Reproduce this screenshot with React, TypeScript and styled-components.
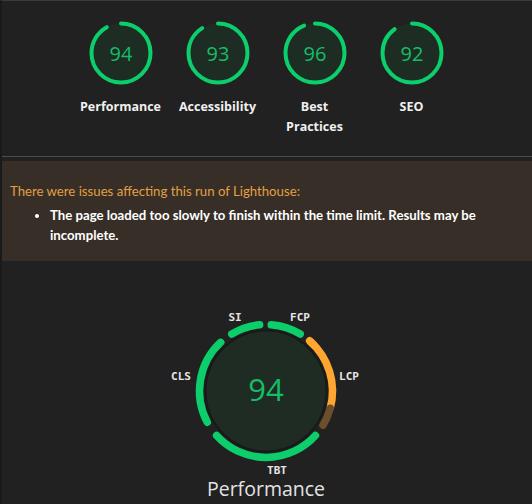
import React from "react";
import styled, { createGlobalStyle } from "styled-components";

const Global = createGlobalStyle`
  html, body { margin: 0; padding: 0; background: #212121; }
  body { font-family: "Open Sans", "Noto Sans", sans-serif; color: #f2f2f2; }
`;

const Page = styled.div`
  width: 532px;
  height: 504px;
  box-sizing: border-box;
  border-top: 1px solid #3a3a3a;
  border-left: 2px solid #1a1a1a;
  background: #212121;
  overflow: hidden;
`;

const TopSection = styled.section`
  padding: 20px 0 19px;
  border-bottom: 1px solid #4a4e51;
`;

const GaugeRow = styled.div`
  display: flex;
  justify-content: center;
  margin-left: -2px;
`;

const GaugeItem = styled.div`
  width: 97px;
  display: flex;
  flex-direction: column;
  align-items: center;
`;

const GaugeLabel = styled.div`
  margin-top: 12px;
  font-size: 12.5px;
  font-weight: 700;
  line-height: 20px;
  text-align: center;
  color: #f0f0f0;
  width: 86px;
`;

const GaugeSvg = styled.svg`
  display: block;
`;

const Spacer = styled.div`
  height: 4px;
`;

const Warning = styled.section`
  background: #372f27;
  padding: 20px 10px 16px 8px;
  font-family: "Lato", "Open Sans", sans-serif;
`;

const WarningTitle = styled.div`
  color: #e39f43;
  font-size: 13.2px;
  line-height: 20px;
`;

const WarningList = styled.ul`
  margin: 4px 0 0;
  padding-left: 40px;
  color: #ffffff;
  font-size: 13.2px;
  font-weight: 700;
  line-height: 20px;
`;

const PerfSection = styled.section`
  padding-top: 50px;
  display: flex;
  flex-direction: column;
  align-items: center;
`;

const PerfBox = styled.div`
  position: relative;
  width: 220px;
  margin-left: -2px;
  display: flex;
  justify-content: center;
`;

const MetricLabel = styled.span<{ $x: number; $y: number }>`
  position: absolute;
  left: ${(p) => p.$x}px;
  top: ${(p) => p.$y}px;
  transform: translate(-50%, -50%);
  font-family: "DejaVu Sans Mono", "Liberation Mono", monospace;
  font-size: 11px;
  font-weight: 700;
  color: #e6e6e6;
  line-height: 1;
`;

const PerfTitle = styled.div`
  margin-top: 9px;
  margin-left: -2px;
  font-size: 19.5px;
  line-height: 18px;
  color: #e3e3e3;
`;

const PASS = "#0cce6b";

function SmallGauge({ score, label }: { score: number; label: string }) {
  const r = 29.5;
  const c = 2 * Math.PI * r;
  return (
    <GaugeItem>
      <GaugeSvg width={64} height={64} viewBox="0 0 64 64">
        <circle cx={32} cy={32} r={r} fill="#1d2d24" />
        <circle
          cx={32}
          cy={32}
          r={r}
          fill="none"
          stroke={PASS}
          strokeWidth={4}
          strokeLinecap="round"
          strokeDasharray={`${(score / 100) * c - 4} ${c}`}
          transform="rotate(-90 32 32)"
        />
        <text
          x={32}
          y={39.5}
          textAnchor="middle"
          fontFamily="'Open Sans', 'Noto Sans', sans-serif"
          fontSize={20}
          fill="#15bd66"
        >
          {score}
        </text>
      </GaugeSvg>
      <GaugeLabel>{label}</GaugeLabel>
    </GaugeItem>
  );
}

function arcPath(cx: number, cy: number, r: number, a0: number, a1: number) {
  const p = (a: number) => {
    const rad = (a * Math.PI) / 180;
    return [cx + r * Math.sin(rad), cy - r * Math.cos(rad)];
  };
  const [x0, y0] = p(a0);
  const [x1, y1] = p(a1);
  const large = a1 - a0 > 180 ? 1 : 0;
  return `M ${x0.toFixed(2)} ${y0.toFixed(2)} A ${r} ${r} 0 ${large} 1 ${x1.toFixed(2)} ${y1.toFixed(2)}`;
}

const segments = [
  { a0: 4.5, a1: 31, color: PASS, cap: "round" },
  { a0: 41, a1: 105, color: "#ffa630", cap: "butt" },
  { a0: 105, a1: 121, color: "#6b4f2a", cap: "round" },
  { a0: 132, a1: 228, color: PASS, cap: "round" },
  { a0: 242, a1: 317, color: PASS, cap: "round" },
  { a0: 329, a1: 354.5, color: PASS, cap: "round" },
] as const;

function PerfGauge() {
  const cx = 80;
  const cy = 80;
  return (
    <PerfBox>
      <GaugeSvg width={160} height={160} viewBox="0 0 160 160">
        <circle cx={cx} cy={cy} r={60.5} fill="#1e2c23" stroke="#191919" strokeWidth={2} />
        <path d={arcPath(cx, cy, 66.5, 41, 46)} fill="none" stroke="#ffa630" strokeWidth={7.5} strokeLinecap="round" />
        {segments.map((s, i) => (
          <path
            key={i}
            d={arcPath(cx, cy, 66.5, s.a0, s.a1)}
            fill="none"
            stroke={s.color}
            strokeWidth={7.5}
            strokeLinecap={s.cap}
          />
        ))}
        <text
          x={cx}
          y={cy + 10}
          textAnchor="middle"
          fontFamily="'Open Sans', 'Noto Sans', sans-serif"
          fontSize={31}
          fontWeight={500}
          fill="#15bd66"
        >
          94
        </text>
      </GaugeSvg>
      <MetricLabel $x={79} $y={6}>SI</MetricLabel>
      <MetricLabel $x={144} $y={6}>FCP</MetricLabel>
      <MetricLabel $x={193} $y={65}>LCP</MetricLabel>
      <MetricLabel $x={25} $y={65}>CLS</MetricLabel>
      <MetricLabel $x={121} $y={159}>TBT</MetricLabel>
    </PerfBox>
  );
}

export default function App() {
  return (
    <>
      <Global />
      <Page>
        <TopSection>
          <GaugeRow>
            <SmallGauge score={94} label="Performance" />
            <SmallGauge score={93} label="Accessibility" />
            <SmallGauge score={96} label="Best Practices" />
            <SmallGauge score={92} label="SEO" />
          </GaugeRow>
        </TopSection>
        <Spacer />
        <Warning>
          <WarningTitle>There were issues affecting this run of Lighthouse:</WarningTitle>
          <WarningList>
            <li>
              The page loaded too slowly to finish within the time limit. Results may be
              incomplete.
            </li>
          </WarningList>
        </Warning>
        <PerfSection>
          <PerfGauge />
          <PerfTitle>Performance</PerfTitle>
        </PerfSection>
      </Page>
    </>
  );
}
